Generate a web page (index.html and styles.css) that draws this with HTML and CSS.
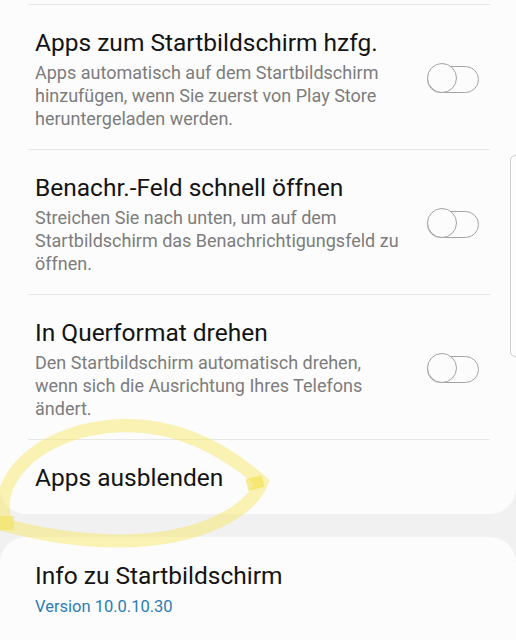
FILE: index.html
```html
<!DOCTYPE html>
<html lang="de">
<head>
<meta charset="utf-8">
<link rel="stylesheet" href="styles.css">
</head>
<body>
<div class="page">
  <section class="card card-top">
    <div class="row">
      <div class="text">
        <div class="title">Apps zum Startbildschirm hzfg.</div>
        <div class="desc">Apps automatisch auf dem Startbildschirm<br>hinzufügen, wenn Sie zuerst von Play Store<br>heruntergeladen werden.</div>
      </div>
      <span class="toggle"><span class="knob"></span></span>
    </div>
    <div class="row">
      <div class="text">
        <div class="title">Benachr.-Feld schnell öffnen</div>
        <div class="desc">Streichen Sie nach unten, um auf dem<br>Startbildschirm das Benachrichtigungsfeld zu<br>öffnen.</div>
      </div>
      <span class="toggle"><span class="knob"></span></span>
    </div>
    <div class="row">
      <div class="text">
        <div class="title">In Querformat drehen</div>
        <div class="desc">Den Startbildschirm automatisch drehen,<br>wenn sich die Ausrichtung Ihres Telefons<br>ändert.</div>
      </div>
      <span class="toggle"><span class="knob"></span></span>
    </div>
    <div class="row row-simple">
      <div class="text">
        <div class="title">Apps ausblenden</div>
      </div>
    </div>
  </section>
  <section class="card card-info">
    <div class="title">Info zu Startbildschirm</div>
    <div class="version">Version 10.0.10.30</div>
  </section>
  <div class="scrollbar"></div>
  <svg class="marker" width="516" height="640" viewBox="0 0 516 640">
    <path d="M 6 522 C -6 488 22 448 82 431 C 145 416 205 432 262 482 C 250 512 200 540 122 541 C 70 541 32 532 0 524" fill="none" stroke="#f6e86a" stroke-opacity="0.5" stroke-width="13" stroke-linecap="round"/>
    <path d="M 247 485 L 263 481" stroke="#f3df3c" stroke-opacity="0.55" stroke-width="12" stroke-linecap="butt"/>
    <path d="M 0 523 L 14 523" stroke="#f3df3c" stroke-opacity="0.45" stroke-width="14"/>
  </svg>
</div>
</body>
</html>
```
FILE: styles.css
```css
html, body {
  margin: 0;
  padding: 0;
}
body {
  background: #f1f1f1;
  font-family: Roboto, "Noto Sans", "DejaVu Sans", sans-serif;
  width: 516px;
  height: 640px;
  overflow: hidden;
}
.page {
  position: relative;
  width: 516px;
  height: 640px;
  overflow: hidden;
}
.card {
  background: #fcfcfc;
}
.card-top {
  padding-top: 4px;
  border-radius: 0 0 26px 26px;
}
.row {
  display: flex;
  align-items: center;
  justify-content: space-between;
  margin: 0 26px 0 28px;
  padding: 23px 11px 19px 7px;
  border-top: 1px solid #e7e7e7;
}
.row-simple {
  padding-bottom: 21px;
}
.title {
  font-size: 24.5px;
  line-height: 30px;
  color: #141414;
  white-space: nowrap;
}
.desc {
  margin-top: 3px;
  font-size: 18px;
  line-height: 23px;
  color: #7c7c7c;
  white-space: nowrap;
}
.toggle {
  position: relative;
  display: block;
  width: 50px;
  height: 25px;
  border: 1.5px solid #a3a3a3;
  border-radius: 14px;
  flex: none;
}
.knob {
  position: absolute;
  left: -1.5px;
  top: -4px;
  width: 28px;
  height: 28px;
  border: 1.5px solid #a3a3a3;
  border-radius: 50%;
  background: #fcfcfc;
}
.card-info {
  margin-top: 23px;
  border-radius: 26px 26px 0 0;
  padding: 24px 35px 30px;
  height: 120px;
}
.version {
  margin-top: 5px;
  font-size: 16.5px;
  line-height: 22px;
  color: #2d7db3;
}
.scrollbar {
  position: absolute;
  left: 510px;
  top: 155px;
  width: 10px;
  height: 200px;
  border: 1px solid #cfcfcf;
  border-radius: 5px;
  background: #fdfdfd;
}
.marker {
  position: absolute;
  left: 0;
  top: 0;
  pointer-events: none;
}
```
